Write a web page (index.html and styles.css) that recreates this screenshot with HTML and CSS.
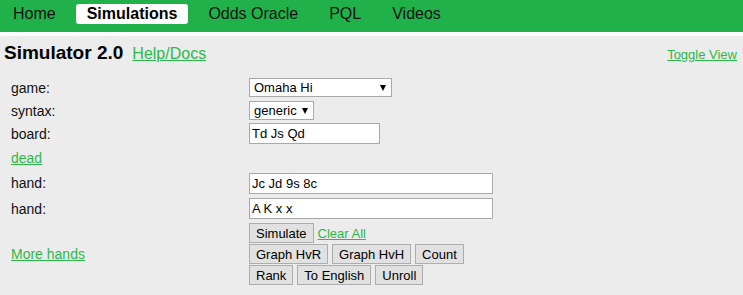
FILE: index.html
```html
<!DOCTYPE html>
<html lang="en">
<head>
    <meta charset="UTF-8">
    <title>Simulator 2.0</title>
    <link rel="stylesheet" href="styles.css">
</head>
<body>

<div class="topnav">
    <a href="#">Home</a>
    <a href="#" class="active">Simulations</a>
    <a href="#">Odds Oracle</a>
    <a href="#">PQL</a>
    <a href="#">Videos</a>
</div>

<div class="page">
    <div class="page-head">
        <h2>Simulator 2.0</h2>
        <a href="#" class="help">Help/Docs</a>
        <a href="#" class="toggle">Toggle View</a>
    </div>

    <div class="sim-form">
        <label>game:</label>
        <div class="field">
            <span class="select-wrap game">
                <select id="game">
                    <option>Omaha Hi</option>
                    <option>Holdem</option>
                    <option>Omaha Hi/Lo</option>
                </select>
            </span>
        </div>

        <label>syntax:</label>
        <div class="field">
            <span class="select-wrap syntax">
                <select id="syntax">
                    <option>generic</option>
                    <option>ranges</option>
                </select>
            </span>
        </div>

        <label>board:</label>
        <div class="field"><input type="text" class="board" value="Td Js Qd"></div>

        <a href="#" class="dead">dead</a>
        <div class="field"></div>

        <label>hand:</label>
        <div class="field"><input type="text" class="hand" value="Jc Jd 9s 8c"></div>

        <label>hand:</label>
        <div class="field"><input type="text" class="hand" value="A K x x"></div>

        <a href="#" class="more">More hands</a>
        <div class="actions">
            <div class="btn-row">
                <button>Simulate</button>
                <a href="#" class="clear">Clear All</a>
            </div>
            <div class="btn-row">
                <button>Graph HvR</button>
                <button>Graph HvH</button>
                <button>Count</button>
            </div>
            <div class="btn-row">
                <button>Rank</button>
                <button>To English</button>
                <button>Unroll</button>
            </div>
        </div>
    </div>
</div>

</body>
</html>
```

FILE: styles.css
```css
/* base */
body {
    font-family: "Liberation Sans", Arial, sans-serif;
    margin: 0;
    padding: 0;
    background: #ececec;
    color: #111;
}
a {
    color: #2db84b;
}

/* top nav */
.topnav {
    background: #20b14a;
    height: 32px;
    border-bottom: 4px solid #fff;
    display: flex;
    gap: 9px;
    padding-left: 2px;
    box-sizing: content-box;
}
.topnav a {
    display: block;
    margin-top: 4px;
    height: 20px;
    line-height: 20px;
    padding: 0 11px;
    font-size: 16px;
    color: #111;
    text-decoration: none;
    border-radius: 3px;
}
.topnav a.active {
    background: #fff;
    font-weight: bold;
    color: #000;
}

/* heading */
.page-head {
    display: flex;
    align-items: baseline;
    padding: 6px 6px 0 4px;
}
.page-head h2 {
    margin: 0;
    font-size: 19px;
    line-height: 22px;
    color: #000;
}
.help {
    margin-left: 9px;
    font-size: 16px;
}
.toggle {
    margin-left: auto;
    align-self: flex-start;
    margin-top: 5px;
    font-size: 13px;
    line-height: 15px;
}

/* form */
.sim-form {
    display: grid;
    grid-template-columns: 238px 1fr;
    grid-template-rows: 23px 23px 23px 25px 26px 25px auto;
    align-items: center;
    padding: 12px 0 0 11px;
    font-size: 14px;
}
.field {
    display: flex;
    align-items: center;
}
.select-wrap {
    position: relative;
    display: inline-block;
}
.select-wrap::after {
    content: "";
    position: absolute;
    right: 6px;
    top: 7px;
    border-left: 3.5px solid transparent;
    border-right: 3.5px solid transparent;
    border-top: 6px solid #000;
    pointer-events: none;
}
select {
    appearance: none;
    -webkit-appearance: none;
    font-family: inherit;
    font-size: 13px;
    height: 19px;
    padding: 0 0 0 4px;
    border: 1px solid #a9a9a9;
    background: #fff;
    color: #000;
    border-radius: 0;
    box-sizing: border-box;
}
.game select {
    width: 143px;
}
.syntax select {
    width: 65px;
}
input[type="text"] {
    font-family: inherit;
    font-size: 13px;
    height: 21px;
    padding: 0 2px;
    border: 1px solid #a9a9a9;
    background: #fff;
    color: #000;
    box-sizing: border-box;
}
.board {
    width: 131px;
}
.hand {
    width: 244px;
}
.dead, .more {
    font-size: 14px;
}

/* buttons */
.actions {
    padding-top: 2px;
}
.btn-row {
    display: flex;
    align-items: center;
    gap: 4px;
    margin-bottom: 1px;
}
button {
    font-family: inherit;
    font-size: 13px;
    height: 20px;
    padding: 0 6px;
    background: #e1e1e1;
    border: 1px solid #adadad;
    color: #000;
    border-radius: 0;
}
.clear {
    font-size: 13px;
}
```
